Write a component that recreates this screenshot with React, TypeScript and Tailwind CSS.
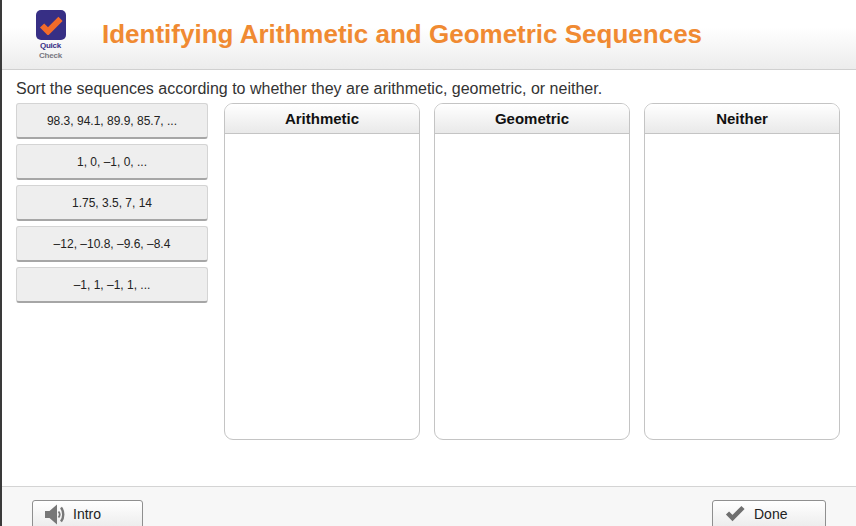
import React from "react";

const cards = ["98.3, 94.1, 89.9, 85.7, ...", "1, 0, –1, 0, ...", "1.75, 3.5, 7, 14", "–12, –10.8, –9.6, –8.4", "–1, 1, –1, 1, ..."];
const cols = ["Arithmetic", "Geometric", "Neither"];

function Speaker() {
  return (
    <svg width="21" height="21" viewBox="0 0 21 21" className="shrink-0">
      <path d="M0 7h4.500l7.500-6.500v20L4.500 14H0z" fill="#777777" />
      <path d="M13.500 7.500c1.500 1.800 1.500 4.200 0 6" stroke="#777777" strokeWidth="1.800" fill="none" />
      <path d="M16 3.500c3 3.800 3 10.200 0 14" stroke="#777777" strokeWidth="2.400" fill="none" />
    </svg>
  );
}

function Check({ className, color, width = 5 }: { className?: string; color: string; width?: number }) {
  return (
    <svg viewBox="0 0 20 16" className={className}>
      <path d="M2.500 8l5 5L18 2.500" stroke={color} strokeWidth={width} fill="none" />
    </svg>
  );
}

export default function App() {
  return (
    <div className="w-[856px] h-[526px] overflow-hidden bg-white flex flex-col border-l-2 border-[#3a3a3a] font-['Liberation_Sans',Arial,sans-serif]">
      <header className="h-[70px] shrink-0 flex border-b border-[#d0d0d0] bg-gradient-to-b from-white from-40% to-[#ececec]">
        <div className="w-[98px] shrink-0 flex flex-col items-center pt-[10px] pr-[1px]">
          <div className="w-[30px] h-[30px] rounded-[5px] bg-[#372f85] flex items-center justify-center">
            <Check className="w-[24px] h-[19px]" color="#f26b2a" width={5} />
          </div>
          <div className="mt-[1px] text-[8px] leading-[10px] font-bold tracking-[-0.2px] text-[#372f85]">Quick</div>
          <div className="text-[8px] leading-[10px] font-bold tracking-[-0.2px] text-[#77777f]">Check</div>
        </div>
        <h1 className="pt-[18px] pl-[2px] text-[26px] leading-[32px] font-bold text-[#f08a32] whitespace-nowrap">
          Identifying Arithmetic and Geometric Sequences
        </h1>
      </header>

      <main className="flex-1 min-h-0 pl-[14px] pr-[16px]">
        <p className="pt-[9px] h-[33px] text-[16px] leading-[19px] text-[#333333] whitespace-nowrap">
          Sort the sequences according to whether they are arithmetic, geometric, or neither.
        </p>
        <div className="flex">
          <div className="w-[192px] shrink-0 flex flex-col gap-[5px]">
            {cards.map((c) => (
              <div
                key={c}
                className="h-[36px] rounded-[3px] bg-[#eeeeee] border border-[#d4d4d4] border-b-2 border-b-[#a6a6a6] flex items-center justify-center text-[12px] text-[#222222] whitespace-nowrap"
              >
                {c}
              </div>
            ))}
          </div>
          <div className="ml-[16px] flex gap-[14px]">
            {cols.map((c) => (
              <section key={c} className="w-[196px] h-[337px] rounded-[9px] border border-[#c4c4c4] overflow-hidden bg-white">
                <div className="h-[30px] pt-[1px] border-b border-[#c4c4c4] bg-gradient-to-b from-white to-[#e9e9e9] flex items-center justify-center text-[15px] font-bold text-[#111111]">
                  {c}
                </div>
              </section>
            ))}
          </div>
        </div>
      </main>

      <footer className="h-[40px] shrink-0 border-t border-[#d4d4d4] bg-[#f7f7f7] flex justify-between pl-[30px] pr-[30px] pt-[13px]">
        <button className="w-[111px] h-[40px] rounded-[3px] border border-[#8f8f8f] bg-gradient-to-b from-white to-[#e4e4e4] flex items-start pl-[12px] pt-[3px] gap-[7px] text-[14px] leading-[20px] text-[#222222]">
          <Speaker />
          <span>Intro</span>
        </button>
        <button className="w-[114px] h-[40px] rounded-[3px] border border-[#8f8f8f] bg-gradient-to-b from-white to-[#e4e4e4] flex items-start pl-[12px] pt-[3px] gap-[9px] text-[14px] leading-[20px] text-[#222222]">
          <Check className="w-[20px] h-[18px] shrink-0" color="#6f6f6f" width={4.5} />
          <span>Done</span>
        </button>
      </footer>
    </div>
  );
}
